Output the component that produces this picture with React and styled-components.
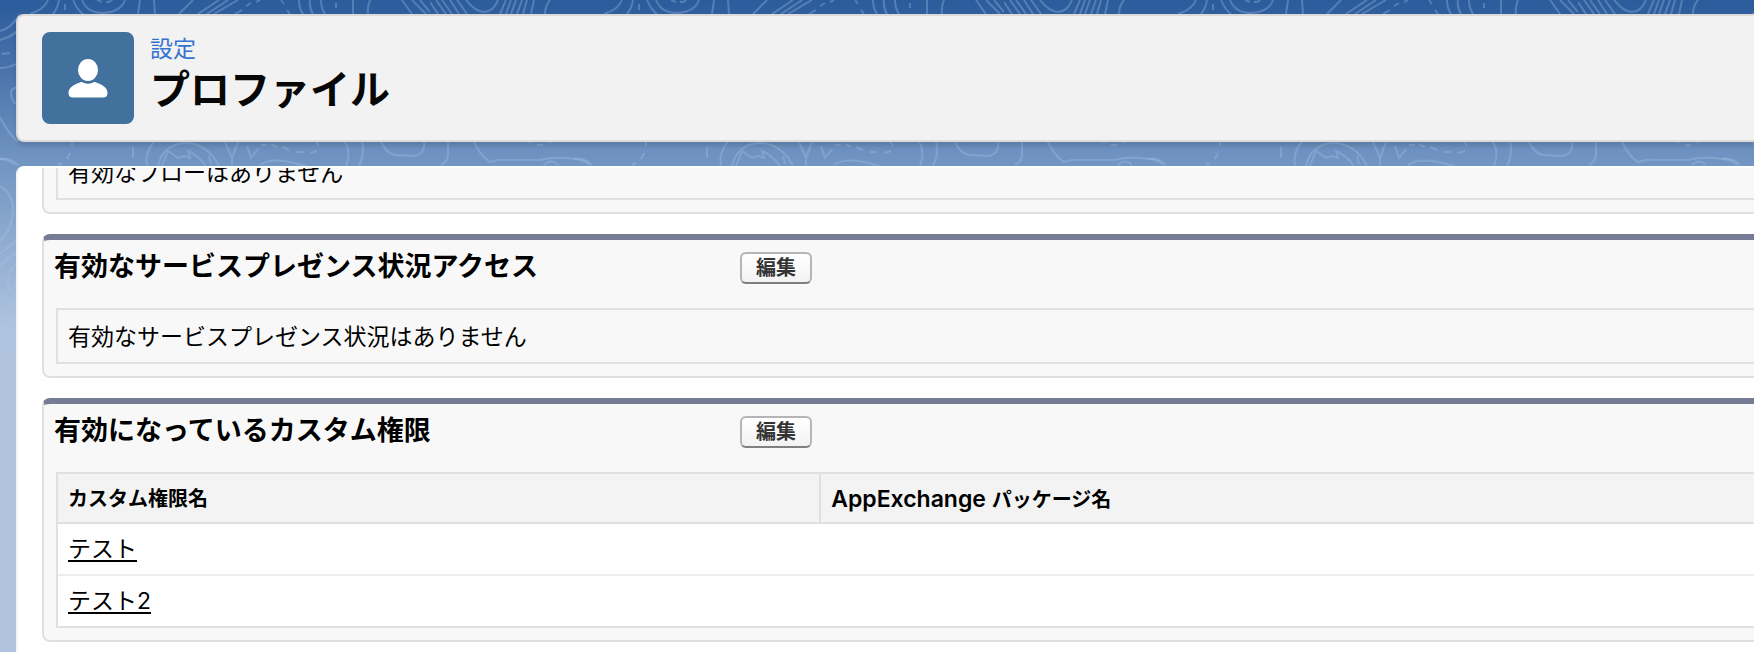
import React from "react";
import styled, { createGlobalStyle } from "styled-components";

const customPermissions = [
  { name: "テスト", packageName: "" },
  { name: "テスト2", packageName: "" },
];

const UserIcon = () => (
  <svg width="40" height="40" viewBox="0 0 40 40" fill="#fff" aria-hidden="true">
    <ellipse cx="20" cy="12" rx="10" ry="11" />
    <path d="M12 24.500C13.500 23.600 14.500 24.300 16 25C18.500 26 21.500 26 24 25C25.500 24.300 26.500 23.600 28 24.500C34 26.500 39.500 29.500 39.500 35C39.500 38 38 39.500 35 39.500H5C2 39.500 0.500 38 0.500 35C0.500 29.500 6 26.500 12 24.500Z" />
  </svg>
);

// 背景の等高線模様
const Contours = () => (
  <Pattern aria-hidden="true">
    <defs>
      <pattern id="contour" x="-144" y="0" width="574" height="360" patternUnits="userSpaceOnUse">
        <g fill="none" stroke="#a9c6ea" strokeOpacity="0.32" strokeWidth="2">
          <path d="M0 2L8 14M6 0L16 14M12 0L22 14M20 0L29 14M27 0L37 14M36 0Q46 12 54 12Q63 12 68 0" />
          <path d="M76 0L70 14M81 0L76 14M86 0L81 14M92 0L87 14M97 0L93 14M104 0L101 14M120 0Q115 6 115 14" />
          <path d="M192 0Q188 10 174 14M203 0Q202 8 197 14M209 4V10M217 0Q221 10 228 15M226 0Q231 13 247 13Q265 12 269 0M241 0L246 2M250 2Q255 2 256 0M284 0L282 14M298 0L299 14" />
          <path d="M337 0L323 14M363 0L342 14M372 0L351 14M382 0L358 14M395 3L390 6M386 10L379 14M404 0L400 2M425 0L428 4M431 10L434 14" />
          <path d="M443 0Q443 8 447 14M454 0Q453 8 457 14M465 0Q465 8 469 14M480 3V8M497 0V14M514 0Q511 8 512 14M546 0L556 14M556 0L570 14M564 0L574 12" />
          <path d="M18 138V156Q17 162 11 165M42 138Q50 156 60 162Q68 159 80 160H110Q125 156 145 159Q155 160 159 165M97 142H103M107 145H113M117 142H122M114 165Q121 158 128 165" />
          <path d="M216 138V146M214 153L211 159M206 163L202 165M277 147V158M299 140Q288 153 291 166" />
          <path d="M302 166Q307 144 330 143Q352 144 363 166M306 166L312 151L322 158L328 156L334 158L332 151Q342 155 350 166M353 156L355 164" />
          <path d="M369 142L376 158L382 142M376 158V166M391 146L395 158L402 149M405 145H411M415 144L421 147M426 147L433 150M440 152H447M454 153L461 151M459 140L463 146" />
          <path d="M404 165Q412 159 428 161Q440 163 450 166M488 140Q496 152 490 166M506 140Q509 155 503 166M524 140Q530 154 540 155L558 156Q570 154 568 140" />
          <path d="M144 31Q156 28 164 14M144 40Q156 37 162 30M146 54L154 53M144 68Q154 68 162 63M162 87Q154 88 155 95Q157 103 162 105M144 117Q151 132 162 142" />
          <path d="M144 159Q154 157 162 165M144 186Q157 194 157 210Q156 230 144 241M144 254L162 239M144 266Q152 257 162 252M162 263Q151 270 152 283Q153 293 162 295M162 277Q157 283 162 290" />
          <path d="M144 296Q150 304 162 309M144 319Q152 321 162 320M144 330Q152 332 162 330M144 342H162M144 352Q152 350 162 351" />
        </g>
      </pattern>
    </defs>
    <rect width="100%" height="360" fill="url(#contour)" />
  </Pattern>
);

const RelatedList = ({ title, children }) => (
  <ListBlock>
    <ListHeader>
      <ListTitle>{title}</ListTitle>
      <EditBtn type="button">編集</EditBtn>
    </ListHeader>
    <ListBody>{children}</ListBody>
  </ListBlock>
);

const App = () => {
  return (
    <React.Fragment>
      <GlobalStyle />
      <Page>
        <Contours />
        <HeaderCard>
          <IconBox>
            <UserIcon />
          </IconBox>
          <div>
            <Category>設定</Category>
            <PageTitle>プロファイル</PageTitle>
          </div>
        </HeaderCard>

        <Panel>
          <ScrolledBlock>
            <ListBody>
              <EmptyText>有効なフローはありません</EmptyText>
            </ListBody>
          </ScrolledBlock>

          <RelatedList title="有効なサービスプレゼンス状況アクセス">
            <EmptyText>有効なサービスプレゼンス状況はありません</EmptyText>
          </RelatedList>

          <RelatedList title="有効になっているカスタム権限">
            <Table>
              <thead>
                <tr>
                  <Th scope="col">カスタム権限名</Th>
                  <Th scope="col">
                    <Latin>AppExchange </Latin>パッケージ名
                  </Th>
                </tr>
              </thead>
              <tbody>
                {customPermissions.map((permission) => (
                  <tr key={permission.name}>
                    <Td>
                      <NameLink href="#">{permission.name}</NameLink>
                    </Td>
                    <Td>{permission.packageName}</Td>
                  </tr>
                ))}
              </tbody>
            </Table>
          </RelatedList>
        </Panel>
      </Page>
    </React.Fragment>
  );
};

export default App;

const GlobalStyle = createGlobalStyle`
  * {
    box-sizing: border-box;
  }

  body {
    margin: 0;
    color: #080707;
    font-family: "Inter", "Noto Sans CJK JP", sans-serif;
    font-size: 23px;
    line-height: 32px;
  }
`;

const Page = styled.div`
  position: relative;
  min-height: 100vh;
  overflow: hidden;

  display: flex;
  flex-direction: column;
  gap: 24px;

  padding: 14px 0 0 16px;
  background: #b0c4df linear-gradient(#2b5c9b 0, #315f9e 14px, #6f93c1 156px, #b0c4df 330px) no-repeat;
`;

const Pattern = styled.svg`
  position: absolute;
  top: 0;
  left: 0;
  width: 100%;
  height: 360px;
`;

const HeaderCard = styled.header`
  position: relative;

  display: flex;
  gap: 16px;

  height: 128px;
  padding: 16px 24px;
  border: 2px solid #dddbda;
  border-right: 0;
  border-radius: 8px 0 0 8px;
  background: #f3f2f2;
  box-shadow: 0 4px 4px rgba(0, 0, 0, 0.12);
`;

const IconBox = styled.div`
  display: flex;
  justify-content: center;
  align-items: center;

  width: 92px;
  height: 92px;
  border-radius: 8px;
  background: #41719c;
`;

const Category = styled.p`
  margin: 0;
  color: #3473cf;
  line-height: 34px;
`;

const PageTitle = styled.h1`
  margin: 0;
  font-size: 40px;
  font-weight: 700;
  line-height: 48px;
`;

const Panel = styled.main`
  position: relative;
  flex: 1;
  overflow: hidden;

  display: flex;
  flex-direction: column;
  gap: 20px;

  padding: 0 0 10px 24px;
  border-top: 2px solid #fff;
  border-left: 2px solid #f4f4f6;
  border-radius: 8px 0 0 0;
  background: #fff;
  color: #000;
`;

const ListBlock = styled.section`
  border: 2px solid #e0e0e0;
  border-top: 6px solid #767c94;
  border-right: 0;
  border-radius: 8px 0 0 8px;
  background: #f8f8f8;
  padding: 0 0 12px 12px;
`;

/* スクロールで上部が隠れているブロック */
const ScrolledBlock = styled(ListBlock)`
  margin-top: -24px;
  border-top: 0;
  border-radius: 0 0 0 8px;
`;

const ListHeader = styled.div`
  display: grid;
  grid-template-columns: 2fr 3fr;
  column-gap: 10px;
  align-items: start;

  height: 68px;
  padding-top: 12px;
  margin-left: -2px;
`;

const ListTitle = styled.h2`
  margin: 0;
  font-size: 27px;
  font-weight: 700;
  line-height: 30px;
`;

const EditBtn = styled.button`
  justify-self: start;

  width: 72px;
  height: 32px;
  padding: 0;

  border: 2px solid #b5b5b5;
  border-bottom-color: #7f7f7f;
  border-radius: 6px;
  background: linear-gradient(#fff, #f3f3f3);

  color: #333;
  font-family: inherit;
  font-size: 20px;
  font-weight: 700;
  line-height: 28px;
  cursor: pointer;
`;

const ListBody = styled.div`
  border: 2px solid #e0e0e0;
  border-right: 0;
`;

const EmptyText = styled.p`
  margin: 0;
  padding: 11px 10px 9px;
`;

const Table = styled.table`
  width: 100%;
  border-spacing: 0;
  table-layout: fixed;
  background: #fff;
`;

const Th = styled.th`
  height: 50px;
  padding: 2px 10px 0;
  border-bottom: 2px solid #e0e0e0;
  background: #f3f3f3;
  font-size: 20px;
  font-weight: 700;
  text-align: left;

  &:first-child {
    width: 45%;
    border-right: 2px solid #e0e0e0;
  }
`;

const Latin = styled.span`
  font-size: 23px;
  font-weight: 600;
`;

const Td = styled.td`
  height: 50px;
  padding: 0 10px;

  tr + tr > & {
    height: 52px;
    border-top: 2px solid #ededed;
  }
`;

const NameLink = styled.a`
  color: #000;
  text-decoration: underline;
  text-decoration-thickness: 2px;
  text-underline-offset: 3px;
`;
